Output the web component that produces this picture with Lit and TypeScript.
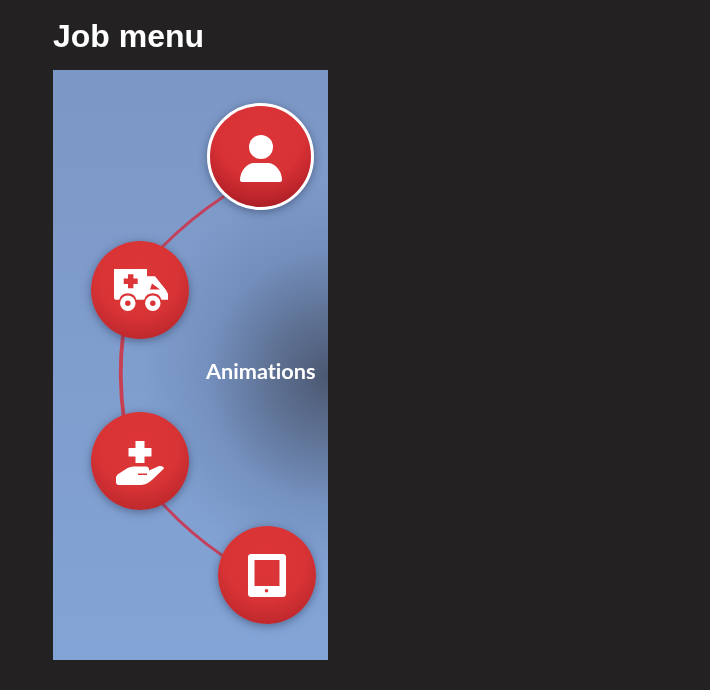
import { LitElement, html, css, svg } from "lit";
import { customElement } from "lit/decorators.js";

const ICONS = {
  user: svg`<svg class="icon i-user" viewBox="0 0 42 47"><circle cx="21" cy="12" r="12" fill="#fff"/><path d="M2 47C.8 47 0 46.200 0 45 0 36 7 28 14 28h14c7 0 14 8 14 17 0 1.200-.8 2-2 2z" fill="#fff"/></svg>`,
  ambulance: svg`<svg class="icon i-amb" viewBox="0 0 54 42"><path fill="#fff" fill-rule="evenodd" d="M0 0H33V7.300H41L52 21 54 25V30.700H47.400A9 9 0 0 0 30.200 30.700H22.400A9 9 0 0 0 5.200 30.700H1L0 29zM14 5.300H19.400V9.600H23.700V15H19.400V19.300H14V15H9.700V9.600H14zM36 20.500H46L38 14.500z"/><path fill="#fff" fill-rule="evenodd" d="M13.800 26.500a7.750 7.750 0 1 0 0 15.500 7.750 7.750 0 0 0 0-15.500zm0 5a2.750 2.750 0 1 1 0 5.500 2.750 2.750 0 0 1 0-5.500zM38.800 26.500a7.750 7.750 0 1 0 0 15.500 7.750 7.750 0 0 0 0-15.500zm0 5a2.750 2.750 0 1 1 0 5.500 2.750 2.750 0 0 1 0-5.500z"/></svg>`,
  hand: svg`<svg class="icon i-hand" viewBox="0 0 48 44"><path fill="#fff" d="M19.500 0H28.500V7H35.500V15.500H28.500V22H19.500V15.500H12.500V7H19.500z"/><path fill="#fff" fill-rule="evenodd" d="M1.500 33.500 10 28C13 26 16 25.500 20 25.500H30C32 25.500 33.500 27 33 29.500L42 25.500C44.500 24.500 47 25 48 27.500L37 38C34 41 29 44 25 44H3C1 44 0 43 0 41V36zM22 32.500H31V34H22z"/></svg>`,
  tablet: svg`<svg class="icon i-tab" viewBox="0 0 38 43"><path fill="#fff" fill-rule="evenodd" d="M3 0H35C36.700 0 38 1.300 38 3V40C38 41.700 36.700 43 35 43H3C1.300 43 0 41.700 0 40V3C0 1.300 1.300 0 3 0zM6.500 6V32H31.500V6zM18.500 35a1.800 1.800 0 1 0 0 3.600 1.800 1.800 0 0 0 0-3.600z"/></svg>`,
};

@customElement("app-root")
export class AppRoot extends LitElement {
  static styles = css`
    :host {
      display: block;
      box-sizing: border-box;
      height: 690px;
      padding: 0 53px;
      background: #232122;
      font-family: "Liberation Sans", Arial, sans-serif;
      overflow: hidden;
    }
    h1 {
      margin: 0;
      padding-top: 18px;
      height: 70px;
      box-sizing: border-box;
      color: #fff;
      font-size: 32px;
      line-height: 36px;
      font-weight: 700;
      white-space: nowrap;
      filter: blur(0.3px);
    }
    .panel {
      position: relative;
      width: 275px;
      height: 590px;
      overflow: hidden;
      background:
        radial-gradient(ellipse 185px 195px at 100% 52%, rgba(72, 82, 106, 0.92) 0%, rgba(84, 100, 130, 0.75) 32%, rgba(100, 125, 168, 0.42) 65%, rgba(125, 155, 205, 0) 100%),
        linear-gradient(180deg, #7c97c5 0%, #7f9dcd 50%, #83a4d6 100%);
    }
    .arc {
      position: absolute;
      inset: 0;
      width: 275px;
      height: 590px;
      filter: blur(0.4px);
    }
    .arc path {
      fill: none;
      stroke: #c2425e;
      stroke-width: 3;
      stroke-linecap: round;
    }
    .arc path.mid {
      stroke: #c73f52;
      stroke-width: 3.800;
    }
    .node {
      position: absolute;
      box-sizing: border-box;
      width: 98px;
      height: 98px;
      border-radius: 50%;
      display: flex;
      align-items: center;
      justify-content: center;
      background: radial-gradient(circle at 48% 36%, #de3638 0%, #d83335 50%, #c22a2e 74%, #9c1d25 100%);
      box-shadow: 0 2px 8px rgba(44, 56, 90, 0.55);
    }
    .node.main {
      width: 107px;
      height: 107px;
      left: 154px;
      top: 33px;
      border: 3px solid #fff;
      background: radial-gradient(circle at 50% 28%, #dc3538 0%, #d93236 48%, #bd252b 72%, #8a141d 100%);
    }
    .node.ambulance { left: 38px; top: 171px; }
    .node.hand { left: 38px; top: 342px; }
    .node.tablet { left: 165px; top: 456px; }
    .icon { display: block; filter: blur(0.4px); }
    .i-user { width: 42px; height: 47px; margin-top: 3px; }
    .i-amb { width: 54px; height: 42px; margin-left: 1px; }
    .i-hand { width: 48px; height: 44px; margin-top: 4px; }
    .i-tab { width: 38px; height: 43px; margin-left: -1px; }
    .label {
      position: absolute;
      left: 153px;
      top: 288px;
      color: #fff;
      font-family: Lato, "Open Sans", sans-serif;
      font-variant-ligatures: none;
      font-weight: 700;
      font-size: 21.700px;
      line-height: 26px;
      white-space: nowrap;
      filter: blur(0.3px);
    }
  `;

  render() {
    return html`
      <h1>Job menu</h1>
      <div class="panel">
        <svg class="arc" viewBox="0 0 275 590">
          <path d="M170 127 Q138 148 108 178"/>
          <path class="mid" d="M70 265 Q65 305 71 350"/>
          <path d="M108 432 Q135 462 170 486"/>
        </svg>
        <div class="node main">${ICONS.user}</div>
        <div class="node ambulance">${ICONS.ambulance}</div>
        <div class="node hand">${ICONS.hand}</div>
        <div class="node tablet">${ICONS.tablet}</div>
        <div class="label">Animations</div>
      </div>
    `;
  }
}
